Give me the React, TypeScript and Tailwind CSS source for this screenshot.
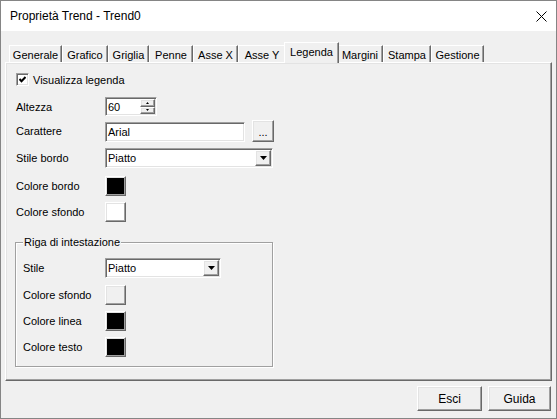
import React from "react";

const sunken =
  "border border-t-[#a0a0a0] border-l-[#a0a0a0] border-r-white border-b-white shadow-[inset_1px_1px_0_#696969,inset_-1px_-1px_0_#e3e3e3]";
const raised =
  "border border-t-white border-l-white border-r-[#696969] border-b-[#696969] shadow-[inset_-1px_-1px_0_#a0a0a0,inset_1px_1px_0_#e3e3e3]";

const tabs: { name: string; w: string; sw: string }[] = [
  { name: "Generale", w: "w-[53px]", sw: "" },
  { name: "Grafico", w: "w-[46px]", sw: "" },
  { name: "Griglia", w: "w-[41px]", sw: "" },
  { name: "Penne", w: "w-[44px]", sw: "" },
  { name: "Asse X", w: "w-[45px]", sw: "" },
  { name: "Asse Y", w: "w-[48px]", sw: "" },
  { name: "Legenda", w: "w-[51px]", sw: "w-[55px]" },
  { name: "Margini", w: "w-[46px]", sw: "" },
  { name: "Stampa", w: "w-[48px]", sw: "" },
  { name: "Gestione", w: "w-[53px]", sw: "" },
];

function DownArrow() {
  return (
    <svg width="7" height="4" viewBox="0 0 7 4">
      <path d="M0 0H7L3.5 4Z" fill="#000" />
    </svg>
  );
}

function Select({ w, value }: { w: string; value: string }) {
  return (
    <div className={`${sunken} ${w} h-[20px] bg-white flex items-center justify-between pl-[2px] pr-[1px]`}>
      <span className="leading-[14px]">{value}</span>
      <div className={`${raised} w-[16px] h-[16px] bg-[#f0f0f0] flex items-center justify-center`}>
        <DownArrow />
      </div>
    </div>
  );
}

function Swatch({ color }: { color: string }) {
  return <div className={`${raised} w-[21px] h-[20px] ${color}`} />;
}

function Row({ label, lw, mt, h, children }: { label: string; lw: string; mt: string; h: string; children: React.ReactNode }) {
  return (
    <div className={`flex items-center ${mt} ${h}`}>
      <div className={`${lw} shrink-0 leading-[14px]`}>{label}</div>
      {children}
    </div>
  );
}

export default function App() {
  return (
    <div className="w-[557px] h-[419px] border border-[#858585] flex flex-col font-['Liberation_Sans',Arial,sans-serif] text-[11px] text-black bg-[#f0f0f0]">
      {/* Title bar */}
      <div className="h-[30px] bg-white flex items-center justify-between pl-[9px] pr-[9px] shrink-0">
        <span className="text-[12px] leading-[16px]">Proprietà Trend - Trend0</span>
        <svg width="11" height="11" viewBox="0 0 11 11">
          <path d="M0.5 0.5L10.5 10.5M10.5 0.5L0.5 10.5" stroke="#000" strokeWidth="1" />
        </svg>
      </div>

      {/* Body */}
      <div className="flex-1 flex flex-col pt-[11px] px-[4px]">
        {/* Tabs */}
        <div className="relative z-10 flex items-end h-[21px] pl-[4px]">
          {tabs.map((t) =>
            t.name === "Legenda" ? (
              <div
                key={t.name}
                className={`${t.sw} relative z-10 mx-[-2px] h-[21px] bg-[#f0f0f0] border-t border-l border-r border-t-white border-l-white border-r-[#696969] shadow-[inset_-1px_0_0_#a0a0a0] text-center pt-[2px] leading-[14px]`}
              >
                {t.name}
              </div>
            ) : (
              <div
                key={t.name}
                className={`${t.w} h-[17px] mb-[1px] bg-[#f0f0f0] border-t border-l border-r border-t-white border-l-white border-r-[#696969] shadow-[inset_-1px_0_0_#a0a0a0] text-center pt-[2px] leading-[14px]`}
              >
                {t.name}
              </div>
            )
          )}
        </div>

        {/* Panel */}
        <div
          className={`relative mt-[-1px] h-[319px] border border-t-white border-l-white border-r-[#696969] border-b-[#696969] shadow-[inset_-1px_-1px_0_#a0a0a0,inset_1px_1px_0_#e3e3e3] flex flex-col pl-[10px]`}
        >
          {/* Checkbox row */}
          <div className="flex items-center mt-[10px] h-[13px]">
            <div className={`${sunken} w-[13px] h-[13px] bg-white flex items-center justify-center`}>
              <svg width="7" height="7" viewBox="0 0 7 7">
                <path d="M0.5 3L2.5 5.2L6.5 1" stroke="#000" strokeWidth="2" fill="none" />
              </svg>
            </div>
            <span className="ml-[4px] leading-[14px]">Visualizza legenda</span>
          </div>

          <Row label="Altezza" lw="w-[89px]" mt="mt-[11px]" h="h-[19px]">
            <div className={`${sunken} w-[52px] h-[19px] bg-white flex items-center justify-between pl-[2px] pr-[1px]`}>
              <span className="leading-[14px]">60</span>
              <div className="flex flex-col w-[15px] h-[15px]">
                <div className={`${raised} flex-1 bg-[#f0f0f0] flex items-center justify-center`}>
                  <svg width="3" height="2" viewBox="0 0 3 2">
                    <path d="M1.5 0L3 2H0Z" fill="#000" />
                  </svg>
                </div>
                <div className={`${raised} flex-1 bg-[#f0f0f0] flex items-center justify-center`}>
                  <svg width="3" height="2" viewBox="0 0 3 2">
                    <path d="M0 0H3L1.5 2Z" fill="#000" />
                  </svg>
                </div>
              </div>
            </div>
          </Row>

          <Row label="Carattere" lw="w-[89px]" mt="mt-[4px]" h="h-[22px]">
            <div className={`${sunken} self-end w-[140px] h-[20px] bg-white flex items-center pl-[2px]`}>
              <span className="leading-[14px]">Arial</span>
            </div>
            <div className={`${raised} ml-[7px] w-[22px] h-[22px] bg-[#f0f0f0] flex items-center justify-center leading-[14px] pt-[2px]`}>
              ...
            </div>
          </Row>

          <Row label="Stile bordo" lw="w-[89px]" mt="mt-[6px]" h="h-[20px]">
            <Select w="w-[168px]" value="Piatto" />
          </Row>

          <Row label="Colore bordo" lw="w-[89px]" mt="mt-[8px]" h="h-[20px]">
            <Swatch color="bg-black" />
          </Row>

          <Row label="Colore sfondo" lw="w-[89px]" mt="mt-[6px]" h="h-[20px]">
            <Swatch color="bg-white" />
          </Row>

          {/* Group box */}
          <div className="relative mt-[20px] ml-[-1px] w-[258px] h-[125px] border border-[#a0a0a0] shadow-[1px_1px_0_white,inset_1px_1px_0_white] flex flex-col pl-[7px]">
            <span className="absolute left-[7px] top-[-8px] bg-[#f0f0f0] px-[1px] leading-[14px]">Riga di intestazione</span>
            <Row label="Stile" lw="w-[82px]" mt="mt-[15px]" h="h-[20px]">
              <Select w="w-[116px]" value="Piatto" />
            </Row>
            <Row label="Colore sfondo" lw="w-[82px]" mt="mt-[7px]" h="h-[20px]">
              <Swatch color="bg-[#f0f0f0]" />
            </Row>
            <Row label="Colore linea" lw="w-[82px]" mt="mt-[6px]" h="h-[20px]">
              <Swatch color="bg-black" />
            </Row>
            <Row label="Colore testo" lw="w-[82px]" mt="mt-[6px]" h="h-[20px]">
              <Swatch color="bg-black" />
            </Row>
          </div>
        </div>

        {/* Buttons */}
        <div className="flex justify-end gap-[6px] mt-[5px] pr-[1px]">
          <div className={`${raised} w-[65px] h-[25px] bg-[#f0f0f0] flex items-center justify-center leading-[14px] text-[12px]`}>
            Esci
          </div>
          <div className={`${raised} w-[63px] h-[25px] bg-[#f0f0f0] flex items-center justify-center leading-[14px] text-[12px]`}>
            Guida
          </div>
        </div>
      </div>
    </div>
  );
}
